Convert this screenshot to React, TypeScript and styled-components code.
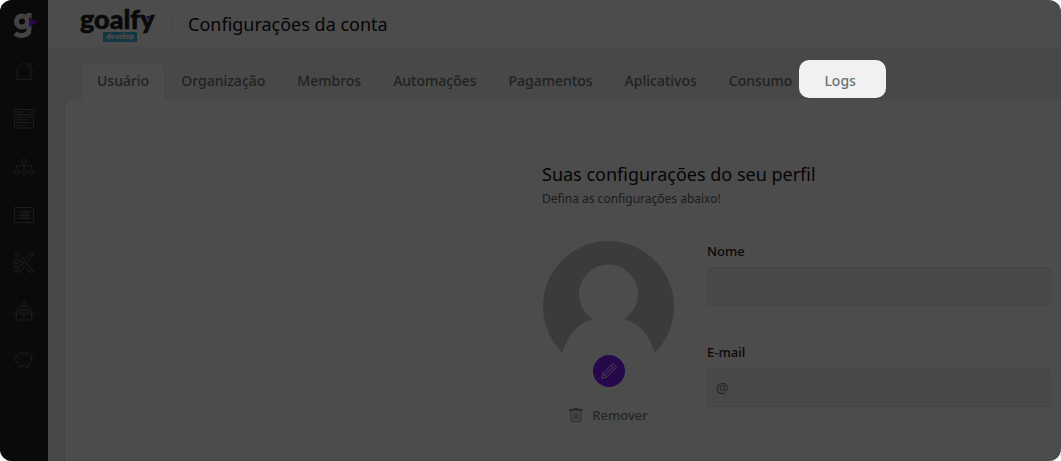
import React from "react";
import styled, { createGlobalStyle } from "styled-components";

const GlobalStyle = createGlobalStyle`
  *, *::before, *::after { box-sizing: border-box; }
  body { margin: 0; background: #fff; font-family: "Noto Sans", "Liberation Sans", sans-serif; }
  button, input { font: inherit; }
`;

const Page = styled.div`
  position: relative;
  display: flex;
  min-height: 100vh;
  overflow: hidden;
  border-radius: 12px;
  background: #f1f1f1;
  color: #222;
`;

const Sidebar = styled.nav`
  display: flex;
  flex-direction: column;
  flex: none;
  width: 48px;
  background: #222;
`;

const SideLink = styled.a<{ $logo?: boolean }>`
  display: grid;
  place-items: center;
  height: ${(p) => (p.$logo ? 47 : 48)}px;
  color: #5b6166;
`;

const Main = styled.div`
  display: flex;
  flex-direction: column;
  flex: 1;
  min-width: 0;
`;

const Header = styled.header`
  display: flex;
  align-items: center;
  height: 47px;
  padding-left: 32px;
  background: #fff;
`;

const Brand = styled.a`
  display: flex;
`;

const Title = styled.h1`
  margin: 0 0 0 11px;
  padding-left: 16px;
  border-left: 1px solid #e6e6e6;
  font-size: 18px;
  line-height: 16px;
  font-weight: 400;
  color: #111;
`;

const Content = styled.main`
  display: flex;
  flex-direction: column;
  flex: 1;
  padding: 16px 0 0 16px;
`;

const Tabs = styled.div`
  display: flex;
  padding-left: 17px;
  margin-bottom: -1px;
`;

const Tab = styled.button<{ $active?: boolean; $spotlit?: boolean }>`
  position: relative;
  z-index: ${(p) => (p.$spotlit ? 10 : 1)};
  height: 36px;
  padding: 0 15px 2px;
  border: 1px solid ${(p) => (p.$active ? "#e6e6e6" : "transparent")};
  border-bottom: 0;
  border-radius: 4px 4px 0 0;
  background: ${(p) => (p.$active ? "#fff" : "transparent")};
  font-size: 14px;
  font-weight: 500;
  color: #6b7177;
  white-space: nowrap;

  &::after {
    content: ${(p) => (p.$spotlit ? '""' : "none")};
    position: absolute;
    inset: -4px -15px 1px -10px;
    border-radius: 10px;
    box-shadow: 0 0 0 200vmax rgba(0, 0, 0, 0.7);
    pointer-events: none;
  }
`;

const Panel = styled.section`
  flex: 1;
  padding: 63px 10px 0 0;
  border: 1px solid #e6e6e6;
  border-right: 0;
  border-bottom: 0;
  border-radius: 8px 0 0 0;
  background: #fff;
`;

const Profile = styled.div`
  max-width: 509px;
  margin-left: auto;
`;

const Heading = styled.h2`
  margin: 0;
  font-size: 18px;
  line-height: 24px;
  font-weight: 400;
  color: #111;
`;

const Hint = styled.p`
  margin: 5px 0 0;
  font-size: 12px;
  line-height: 16px;
  font-weight: 400;
  color: #5b6166;
`;

const Form = styled.form`
  display: flex;
  gap: 32px;
  margin-top: 33px;
`;

const AvatarColumn = styled.div`
  display: flex;
  flex-direction: column;
  align-items: center;
  gap: 32px;
  flex: none;
  width: 133px;
`;

const Avatar = styled.div`
  position: relative;
  display: flex;
`;

const EditButton = styled.button`
  position: absolute;
  left: 50%;
  bottom: -14px;
  transform: translateX(-50%);
  display: grid;
  place-items: center;
  width: 32px;
  height: 32px;
  padding: 0;
  border: 0;
  border-radius: 50%;
  background: #7d1ffa;
  color: #fff;
`;

const RemoveButton = styled.button`
  display: flex;
  align-items: center;
  gap: 9px;
  padding: 0;
  border: 0;
  background: none;
  font-size: 13px;
  line-height: 20px;
  font-weight: 500;
  color: #7a8085;
`;

const Fields = styled.div`
  display: flex;
  flex-direction: column;
  gap: 36px;
  flex: 1;
  min-width: 0;
  padding-top: 1px;
`;

const Field = styled.label`
  display: flex;
  flex-direction: column;
  gap: 6px;
  font-size: 13px;
  line-height: 20px;
  font-weight: 500;
`;

const Input = styled.input`
  width: 100%;
  height: 39px;
  padding: 0 8px;
  border: 1px solid #e6e6e6;
  border-radius: 4px;
  background: #f1f1f1;
  font-size: 14px;
  font-weight: 400;
  color: #222;
  &::placeholder { color: #7a8085; opacity: 1; }
`;

const Icon = ({ size = 20, children }: { size?: number; children: React.ReactNode }) => (
  <svg width={size} height={size} viewBox="0 0 20 20" fill="none" stroke="currentColor"
    strokeWidth="1" strokeLinecap="round" strokeLinejoin="round" aria-hidden="true">
    {children}
  </svg>
);

const menu = [
  { name: "Início", icon: <path d="M1 10.500 10 1.500 19 10.500M3 9v9.500h14V9M14.500 5.500V2.500H16.500v5" /> },
  { name: "Processos", icon: <><rect x=".5" y=".5" width="19" height="5" rx="1" /><path d="M3 3h4.500M16.500 2.500v1" strokeWidth="1.500" /><rect x=".5" y="8" width="19" height="11" rx="1" /><path d="M.5 13.500h19M3 10.800h12M3 16.200h8" /></> },
  { name: "Equipes", icon: <><circle cx="10" cy="4.500" r="2.200" /><circle cx="2.700" cy="15" r="2.200" /><circle cx="10" cy="15" r="2.200" /><circle cx="17.300" cy="15" r="2.200" /><path d="M10 6.800v6M2.500 11V9h15v2" /></> },
  { name: "Listas", icon: <><rect x=".5" y="2.500" width="19" height="15" rx="1" /><path d="M4.500 7h.5M4.500 10h.5M4.500 13h.5M7 7h8.500M7 10h8.500M7 13h8.500" strokeWidth="1.500" /></> },
  { name: "Integrações", icon: <path d="M1 1h5l4.500 5.500L15 1h4.500l-7 9 7 9H15l-4.500-5.500L6 19H1l4-5M1 1l3 4M1 5.500l10 4.500-10 4.500zM1 10h5" /> },
  { name: "Assistente", icon: <><path d="M2.500 11C2.500 7 4.500 5 7.500 5h5c3 0 5 2 5 6v6.500q0 1.500-1.500 1.500H4q-1.500 0-1.500-1.500z" /><rect x="4.500" y="8.500" width="11" height="5" rx="2.500" /><path d="M10 5V2.500M2.500 10.500C1 10.500.5 11.500.5 13.500s.5 3 2 3M17.500 10.500c1.500 0 2 1 2 3s-.5 3-2 3M6.500 11h2l1 .8 1.500-1.300 1 .5h1.500M8 16.500h4" /><circle cx="10" cy="1.500" r=".8" /></> },
  { name: "Financeiro", icon: <><path d="M2 5.500 4.500 6C6.500 3.500 9 3 11 3c4 0 6.500 3 6.500 6.300 0 2.500-1.200 4.500-3 5.900V18h-3v-1.500h-4V18h-3v-3l-2-2.500L.7 11.500V8.500l1.800-.5zM17.500 8.500c1 .3 2-.3 2-1.500M8 5.800c1.500-.6 3.300-.6 4.800 0" /><circle cx="5.500" cy="9" r=".4" /></> },
];

const tabs = ["Usuário", "Organização", "Membros", "Automações", "Pagamentos", "Aplicativos", "Consumo", "Logs"];

export default function App() {
  return (
    <Page>
      <GlobalStyle />
      <Sidebar aria-label="Menu">
        <SideLink $logo href="#" aria-label="goalfy">
          <svg width="28" height="30" viewBox="0 0 28 30" aria-hidden="true">
            <g fill="none" stroke="#ddd" strokeWidth="5">
              <circle cx="12" cy="12.500" r="5.500" />
              <path d="M19 4v16.500c0 6.500-9 7.500-14 4" />
            </g>
            <path d="M19 8l9 5-9 5z" fill="#7d1ffa" />
          </svg>
        </SideLink>
        {menu.map((m) => (
          <SideLink key={m.name} href="#" aria-label={m.name}><Icon>{m.icon}</Icon></SideLink>
        ))}
      </Sidebar>
      <Main>
        <Header>
          <Brand href="#" aria-label="goalfy develop">
            <svg width="80" height="40" viewBox="0 0 80 40" aria-hidden="true">
              <text x="0" y="25" fontFamily="Lato, sans-serif" fontSize="27" fontWeight="900" fill="#222" stroke="#222" strokeWidth=".6">goalfy</text>
              <path d="M66 12h4l-2 4z" fill="#7d1ffa" />
              <rect x="23" y="28" width="34" height="10" rx="1" fill="#3fb9dd" />
              <text x="40" y="35" textAnchor="middle" fontFamily="Inter, sans-serif" fontSize="7" fontWeight="800" fill="#fff">develop</text>
            </svg>
          </Brand>
          <Title>Configurações da conta</Title>
        </Header>
        <Content>
          <Tabs role="tablist">
            {tabs.map((t) => (
              <Tab key={t} role="tab" aria-selected={t === "Usuário"} $active={t === "Usuário"} $spotlit={t === "Logs"}>{t}</Tab>
            ))}
          </Tabs>
          <Panel>
            <Profile>
              <Heading>Suas configurações do seu perfil</Heading>
              <Hint>Defina as configurações abaixo!</Hint>
              <Form>
                <AvatarColumn>
                  <Avatar>
                    <svg width="133" height="133" viewBox="0 0 133 133" aria-hidden="true">
                      <defs><clipPath id="disc"><circle cx="66.500" cy="66.500" r="65.500" /></clipPath></defs>
                      <circle cx="66.500" cy="66.500" r="65.500" fill="#c6c6c6" />
                      <g fill="#fff" clipPath="url(#disc)">
                        <circle cx="66.500" cy="54" r="29.500" />
                        <path d="M20 114C27 91 39 82 52 79h29c13 3 25 12 32 35v20H20z" />
                      </g>
                      <path d="M20 113a65.500 65.500 0 0 0 93 0" fill="none" stroke="#f4f4f4" />
                    </svg>
                    <EditButton type="button" aria-label="Editar foto">
                      <Icon size={16}><path d="M1 19l1.500-6L14 1.500q1-1 2 0L18.500 4q1 1 0 2L7 17.500zM2.500 13 7 17.500M12.500 3l4.500 4.500M4.800 15.200 14.500 5.500" /></Icon>
                    </EditButton>
                  </Avatar>
                  <RemoveButton type="button">
                    <Icon size={14}><path d="M1 3.500h18V2H1zM7 2V.5h6V2M3 3.500V18q0 1.500 1.500 1.500h11Q17 19.500 17 18V3.500M7 7v9M10 7v9M13 7v9" strokeWidth="1.300" /></Icon>
                    Remover
                  </RemoveButton>
                </AvatarColumn>
                <Fields>
                  <Field>Nome<Input type="text" name="nome" /></Field>
                  <Field>E-mail<Input type="email" name="email" placeholder="@" /></Field>
                </Fields>
              </Form>
            </Profile>
          </Panel>
        </Content>
      </Main>
    </Page>
  );
}
